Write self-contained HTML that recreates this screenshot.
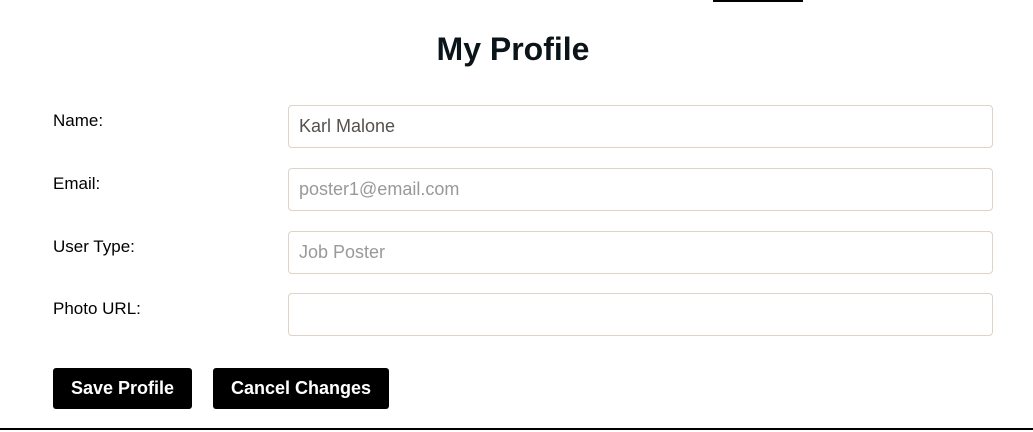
<!DOCTYPE html>
<html><head><style>
body{margin:0;width:1033px;height:432px;background:#fff;font-family:"Liberation Sans",Arial,sans-serif;position:relative;overflow:hidden}
.tl{position:absolute;left:713px;top:0;width:90px;height:2px;background:#000}
h1{position:absolute;left:0;width:1026px;top:30px;margin:0;text-align:center;font-size:32px;font-weight:bold;color:#0b1418;line-height:38px}
.lbl{position:absolute;left:53px;font-size:17px;color:#000}
.in{position:absolute;left:288px;height:41px;border:1px solid #ddd3c9;border-radius:4px;box-sizing:content-box;font-size:18px;line-height:41px;padding-left:10px;width:693px;color:#999}
.btn{position:absolute;top:368px;height:41px;background:#000;color:#fff;font-weight:bold;font-size:18px;line-height:41px;text-align:center;border-radius:3px}
.bl{position:absolute;left:0;top:428px;width:1033px;height:2px;background:#000}
</style></head><body>
<div class="tl"></div>
<h1>My Profile</h1>
<div class="lbl" style="top:111px">Name:</div>
<div class="lbl" style="top:174px">Email:</div>
<div class="lbl" style="top:237px">User Type:</div>
<div class="lbl" style="top:299px">Photo URL:</div>
<div class="in" style="top:105px;color:#55504c">Karl Malone</div>
<div class="in" style="top:168px">poster1@email.com</div>
<div class="in" style="top:231px">Job Poster</div>
<div class="in" style="top:293px"></div>
<div class="btn" style="left:53px;width:139px">Save Profile</div>
<div class="btn" style="left:213px;width:176px">Cancel Changes</div>
<div class="bl"></div>
</body></html>
